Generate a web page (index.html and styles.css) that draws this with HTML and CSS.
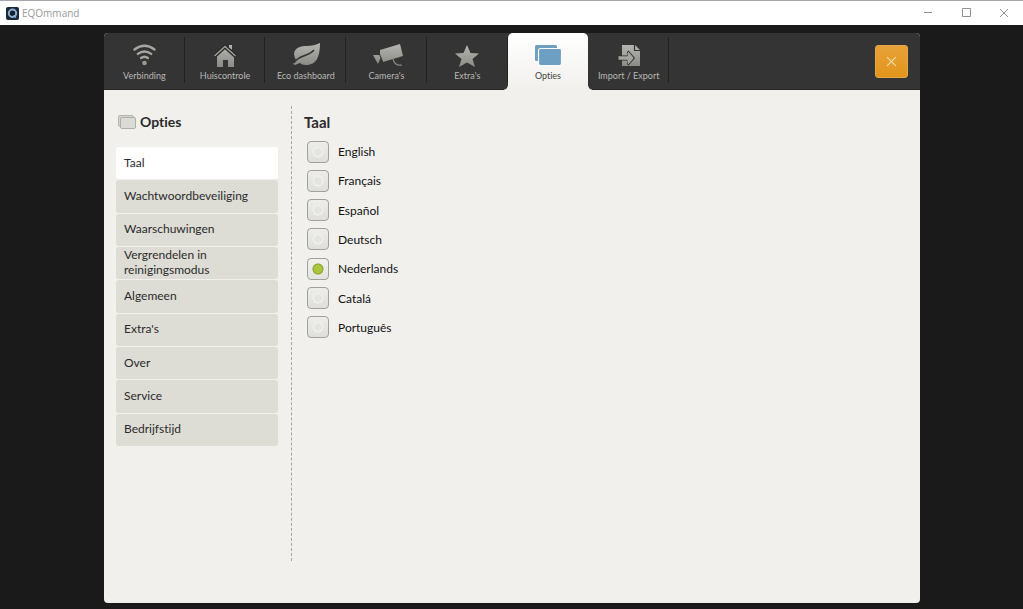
FILE: index.html
```html
<!DOCTYPE html>
<html lang="nl">
<head>
<meta charset="utf-8">
<title>EQOmmand</title>
<link rel="stylesheet" href="styles.css">
</head>
<body>
<header class="titlebar">
  <svg class="app-icon" viewBox="0 0 13 13" aria-hidden="true"><rect width="13" height="13" rx="2" fill="#17283a"/><circle cx="6.5" cy="6.3" r="3.7" fill="#14202c" stroke="#8eb0cf" stroke-width="2"/><path d="M7.500 8.500 10 10.500" stroke="#8eb0cf" stroke-width="1.600"/></svg>
  <h1 class="app-name">EQOmmand</h1>
  <div class="window-controls">
    <button class="window-button" aria-label="Minimaliseren"><svg viewBox="0 0 10 10"><path d="M1 4.500h8"/></svg></button>
    <button class="window-button" aria-label="Maximaliseren"><svg viewBox="0 0 10 10"><path d="M1.500 .5h8v8h-8z"/></svg></button>
    <button class="window-button" aria-label="Sluiten"><svg viewBox="0 0 10 10"><path d="m1 1 8 8M9 1 1 9"/></svg></button>
  </div>
</header>
<svg class="defs" width="0" height="0" aria-hidden="true"><defs><linearGradient id="metal" x1="0" y1="0" x2="0" y2="1"><stop offset="0" stop-color="#b5b5b1"/><stop offset="1" stop-color="#8b8c86"/></linearGradient></defs></svg>
<main class="stage">
  <div class="panel">
    <div class="topbar">
      <nav class="tabs">
        <button class="tab"><svg class="tab-icon" viewBox="0 0 30 28"><g fill="none" stroke="#a6a6a2" stroke-width="2.400" stroke-linecap="round"><path d="M5.500 8.500q10-7.500 20 0"/><path d="M8.800 12.900q6.700-5 13.400 0"/><path d="M12.100 17q3.400-2.500 6.800 0"/></g><circle cx="15.500" cy="22" r="2.300" fill="#999a96"/></svg>Verbinding</button>
        <button class="tab"><svg class="tab-icon" viewBox="0 0 30 28"><path fill="url(#metal)" d="M19 4h3v5l-3-2zM7 15l8-8 9 8v11h-6v-7h-5v7H7z"/><path d="M4.500 15 15 5.500 25.500 15" fill="none" stroke="#292929" stroke-width="4"/><path d="M4.500 15 15 5.500 25.500 15" fill="none" stroke="#a2a39f" stroke-width="1.400"/></svg>Huiscontrole</button>
        <button class="tab"><svg class="tab-icon" viewBox="0 0 30 28"><path fill="url(#metal)" d="M29 2c0 13-3 22-14 22-3 0-5-1-6-2l-5 2-2-1 3-4C0 10 6 5 15 5c6 0 10-1 14-3z"/><path d="M3 22c4-8 14-6 20-13" fill="none" stroke="#343434" stroke-width="1.600"/></svg>Eco dashboard</button>
        <button class="tab"><svg class="tab-icon" viewBox="0 0 30 28"><path fill="url(#metal)" d="m9 9 20-6 3 12-20 6-2-5-3 7-5-9 7 0z" transform="translate(-1 0)"/><path d="m7.500 13 3 8" stroke="#343434"/><path d="M21 18c1 4 4 7 9 6" fill="none" stroke="#858681" stroke-width="1.200"/></svg>Camera's</button>
        <button class="tab"><svg class="tab-icon" viewBox="0 0 30 28"><path fill="url(#metal)" d="m15 4 3.500 8 8.500.5-6.500 5.500 2.500 8-8-4.500L7 26l2.500-8L3 12.500l8.500-.5z"/></svg>Extra's</button>
        <button class="tab tab-active" aria-current="page"><svg class="tab-icon" viewBox="0 0 30 28"><rect x="2" y="4" width="22" height="16" rx="1.500" fill="#6f9ebf"/><rect x="5.500" y="7.500" width="23" height="17" rx="2" fill="#6c9fc1" stroke="#f9f9f8" stroke-width="1.200"/></svg>Opties</button>
        <button class="tab"><svg class="tab-icon" viewBox="0 0 30 28"><path fill="url(#metal)" d="M8 4h13l5 5v16H8z"/><path d="M20.500 4v5.500H26" fill="none" stroke="#303030" stroke-width="1.200"/><path d="M4.500 14.500H13V11l1.500-1.500 6.500 7.500-6.500 7.500L13 23v-3.500H4.500z" fill="#2b2b2b"/><path d="M4.500 15.200h9v-3.500l1-1 5.300 6.300-5.300 6.300-1-1v-3.500h-9z" fill="#a4a5a1"/></svg>Import / Export</button>
      </nav>
      <button class="close" aria-label="Opties sluiten"><svg viewBox="0 0 10 10"><path d="m1 1 8 8M9 1 1 9"/></svg></button>
    </div>
    <div class="content">
      <aside class="sidebar">
        <h2 class="heading"><svg class="heading-icon" viewBox="0 0 20 16"><rect x="1.500" y="1.500" width="15" height="11" rx="1.500" fill="#d5d5cf" stroke="#b6b7b1"/><rect x="3.500" y="3.500" width="15" height="11" rx="1.500" fill="#dcdcd6" stroke="#aeafa9"/></svg>Opties</h2>
        <div class="menu">
          <button class="menu-item menu-current" aria-current="true">Taal</button>
          <button class="menu-item">Wachtwoordbeveiliging</button>
          <button class="menu-item">Waarschuwingen</button>
          <button class="menu-item">Vergrendelen in reinigingsmodus</button>
          <button class="menu-item">Algemeen</button>
          <button class="menu-item">Extra's</button>
          <button class="menu-item">Over</button>
          <button class="menu-item">Service</button>
          <button class="menu-item">Bedrijfstijd</button>
        </div>
      </aside>
      <section class="settings">
        <h2 class="heading" id="language-title">Taal</h2>
        <div class="languages" role="radiogroup" aria-labelledby="language-title">
          <label class="language"><input class="radio" type="radio" name="language">English</label>
          <label class="language"><input class="radio" type="radio" name="language">Français</label>
          <label class="language"><input class="radio" type="radio" name="language">Español</label>
          <label class="language"><input class="radio" type="radio" name="language">Deutsch</label>
          <label class="language"><input class="radio" type="radio" name="language" checked>Nederlands</label>
          <label class="language"><input class="radio" type="radio" name="language">Catalá</label>
          <label class="language"><input class="radio" type="radio" name="language">Português</label>
        </div>
      </section>
    </div>
  </div>
</main>
</body>
</html>
```

FILE: styles.css
```css
* { box-sizing: border-box; }
body {
  margin: 0;
  min-height: 100vh;
  display: flex;
  flex-direction: column;
  background: #1a1a1a;
  color: #2b2b2b;
  font: 12px/15px Lato, sans-serif;
  font-variant-ligatures: none;
}
button { font: inherit; font-variant-ligatures: none; color: inherit; border: 0; margin: 0; padding: 0; background: none; }
h1, h2 { margin: 0; }
.defs { position: absolute; }
.titlebar {
  display: flex;
  align-items: center;
  height: 25px;
  padding-left: 6px;
  background: #fff;
  border-top: 1px solid #aaa3b0;
}
.app-icon { width: 13px; height: 13px; }
.app-name { margin-left: 3px; font: 400 10px/16px "Open Sans", sans-serif; color: #999; }
.window-controls { display: flex; margin-left: auto; }
.window-button { width: 38px; height: 24px; display: grid; place-items: center; }
.window-button svg { width: 10px; height: 10px; fill: none; stroke: #909090; }
.stage { flex: 1; display: flex; padding: 8px 103px 6px 104px; }
.panel {
  flex: 1;
  display: flex;
  flex-direction: column;
  border-radius: 4px;
  background: #f1f0ed;
}
.topbar {
  display: flex;
  justify-content: space-between;
  align-items: center;
  height: 57px;
  padding-right: 12px;
  background: #343434;
  border-bottom: 1px solid #242424;
  border-radius: 4px 4px 0 0;
}
.tabs { display: flex; width: 565px; height: 57px; align-self: flex-start; }
.tab {
  flex: 1 1 0;
  display: flex;
  flex-direction: column;
  align-items: center;
  padding-top: 8px;
  font-size: 9px;
  line-height: 12px;
  color: #b8b8b5;
  white-space: nowrap;
  background: linear-gradient(#222, #222) right 4px / 1px 46px no-repeat;
}
.tab-icon { width: 30px; height: 28px; margin-bottom: 1px; overflow: visible; }
.tab-active {
  position: relative;
  background: linear-gradient(#fff, #f1f0ed);
  border-radius: 5px 5px 0 0;
  color: #444;
}
.tab-active::before,
.tab-active::after {
  content: "";
  position: absolute;
  bottom: 0;
  width: 4px;
  height: 4px;
}
.tab-active::before { right: 100%; background: radial-gradient(circle at 0 0, transparent 3px, #f1f0ed 4px); }
.tab-active::after { left: 100%; background: radial-gradient(circle at 100% 0, transparent 3px, #f1f0ed 4px); }
.close {
  width: 33px;
  height: 33px;
  display: grid;
  place-items: center;
  border: 1px solid #e6a94a;
  border-radius: 3px;
  background: linear-gradient(#e5a137, #e3951b);
}
.close svg { width: 11px; height: 11px; fill: none; stroke: #f7dca9; }
.content { flex: 1; display: flex; padding: 16px 12px 42px; }
.sidebar { width: 176px; padding-right: 13px; border-right: 1px dashed #a5a5a3; }
.heading { display: flex; align-items: center; height: 31px; font-size: 15px; line-height: 20px; }
.sidebar .heading { font-size: 14px; }
.heading-icon { width: 20px; height: 16px; margin: 0 3px 0 1px; }
.menu { display: grid; grid-auto-rows: 1fr; gap: 1px; min-height: 299px; margin-top: 10px; }
.menu-item {
  padding: 0 8px 2px;
  text-align: left;
  border-radius: 3px;
  background: #dddcd5;
}
.menu-current { background: #fff; }
.settings { flex: 1; padding-left: 12px; }
.languages { display: grid; grid-auto-rows: 1fr; height: 205px; margin-left: 3px; justify-items: start; }
.language { display: flex; align-items: center; color: #111; }
.radio {
  appearance: none;
  width: 22px;
  height: 22px;
  margin: 0 9px 0 0;
  border: 1px solid #a0a09e;
  border-radius: 4px;
  background: radial-gradient(circle, #e4e4e2 0 3px, #f0f0ee 5px, transparent 6px), linear-gradient(#ededeb, #dededb);
}
.radio:checked {
  background: radial-gradient(circle, #acc53e 0 4px, #87a030 5px, transparent 6px), linear-gradient(#f1f1ee, #e3e3e0);
}
```
